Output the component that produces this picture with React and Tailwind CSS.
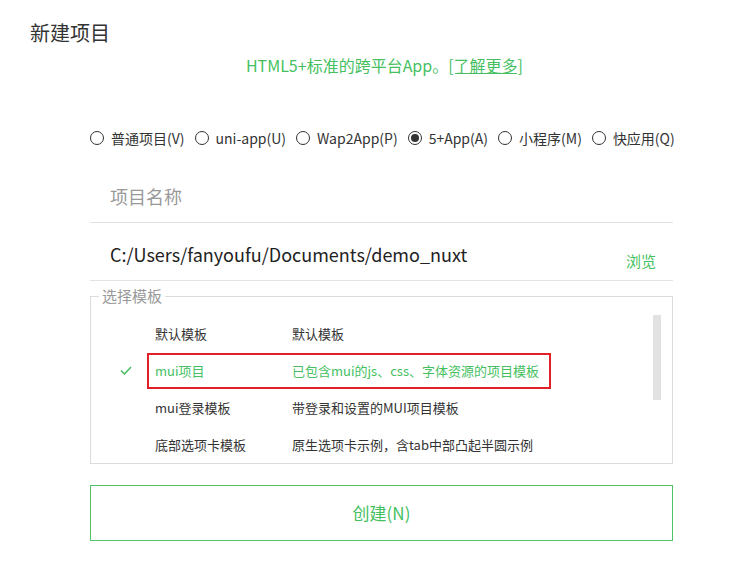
import React from "react";

const GREEN = "text-[#45bf5f]";

function Radio({ checked, label }) {
  return (
    <div className="flex items-center gap-[7px]">
      <span className="w-[14px] h-[14px] rounded-full border border-[#333] flex items-center justify-center">
        {checked && <span className="w-[8px] h-[8px] rounded-full bg-[#333]" />}
      </span>
      <span className="text-[14px] leading-[20px] text-[#333]">{label}</span>
    </div>
  );
}

const rows = [
  ["默认模板", "默认模板"],
  ["mui项目", "已包含mui的js、css、字体资源的项目模板"],
  ["mui登录模板", "带登录和设置的MUI项目模板"],
  ["底部选项卡模板", "原生选项卡示例，含tab中部凸起半圆示例"],
];

export default function App() {
  return (
    <div
      className="w-[734px] h-[564px] bg-white overflow-hidden"
      style={{ fontFamily: '"Noto Sans CJK SC", sans-serif' }}
    >
      <div className="h-[55px] pl-[30px] pt-[19px]">
        <div className="text-[20px] leading-[28px] text-[#333]">新建项目</div>
      </div>
      <div className="ml-[90px] w-[583px]">
        <div className={`text-center text-[16px] leading-[20px] ${GREEN} pl-[6px]`}>
          HTML5+标准的跨平台App。<span className="underline">[了解更多]</span>
        </div>
        <div className="mt-[53px] flex items-center gap-[10px] whitespace-nowrap">
          <Radio label="普通项目(V)" />
          <Radio label="uni-app(U)" />
          <Radio label="Wap2App(P)" />
          <Radio label="5+App(A)" checked />
          <Radio label="小程序(M)" />
          <Radio label="快应用(Q)" />
        </div>
        <div className="h-[75px] border-b border-[#e3e3e3] pt-[36px] pl-[20px]">
          <div className="text-[18px] leading-[24px] text-[#999]">项目名称</div>
        </div>
        <div className="h-[58px] border-b border-[#e3e3e3] pt-[19px] pl-[20px] pr-[17px] flex items-start justify-between">
          <div className="text-[18px] leading-[24px] text-[#222]">C:/Users/fanyoufu/Documents/demo_nuxt</div>
          <div className={`mt-[9px] text-[15px] leading-[20px] ${GREEN}`}>浏览</div>
        </div>
        <div className="mt-[15px] relative h-[168px] w-[583px] border border-[#dcdcdc]">
          <span className="absolute left-[8px] top-[-11px] bg-white px-[3px] text-[15px] leading-[20px] text-[#999] z-10">
            选择模板
          </span>
          <div className="h-full overflow-hidden pt-[18px]">
            {rows.map((r, i) => {
              const sel = i === 1;
              return (
                <div key={i} className="h-[37px] flex items-center">
                  <div className="w-[56px] flex justify-end pr-[15px]">
                    {sel && (
                      <svg width="12" height="9" viewBox="0 0 12 9">
                        <path d="M1 4.5 L4.5 8 L11 1" fill="none" stroke="#45bf5f" strokeWidth="1.5" />
                      </svg>
                    )}
                  </div>
                  <div
                    className={`h-[36px] w-[404px] flex items-center border-2 pl-[6px] text-[13px] leading-[18px] ${
                      sel ? "border-[#e3202a] text-[#45bf5f]" : "border-transparent text-[#333]"
                    }`}
                  >
                    <span className="w-[137px]">{r[0]}</span>
                    <span>{r[1]}</span>
                  </div>
                </div>
              );
            })}
          </div>
          <div className="absolute right-[11px] top-[18px] w-[8px] h-[85px] bg-[#e2e2e2]" />
        </div>
        <div className={`mt-[21px] h-[56px] border border-[#52c267] flex items-center justify-center text-[17px] ${GREEN}`}>
          创建(N)
        </div>
      </div>
    </div>
  );
}
